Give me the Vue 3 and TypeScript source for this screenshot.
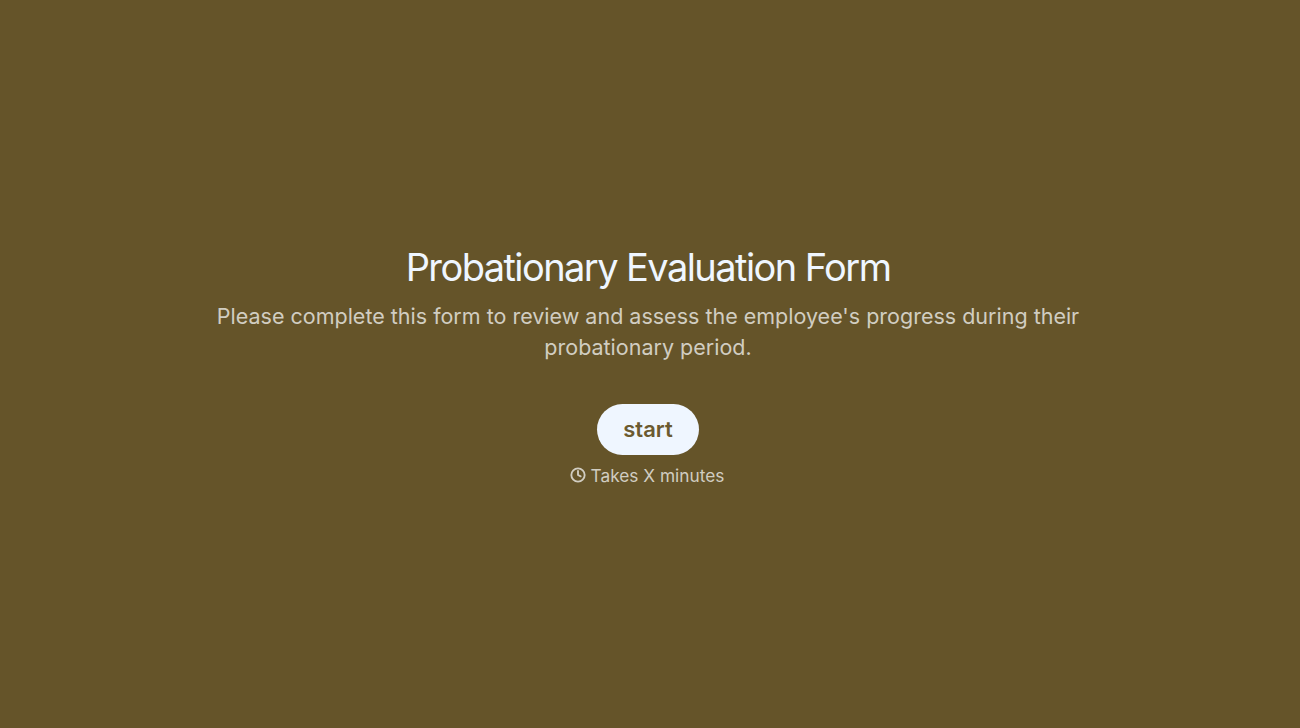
<script setup lang="ts">
const title = 'Probationary Evaluation Form'
</script>

<template>
  <main class="page">
    <section class="intro">
      <h1 class="title">{{ title }}</h1>
      <p class="desc">Please complete this form to review and assess the employee's progress during their probationary period.</p>
      <button class="start" type="button">start</button>
      <div class="time">
        <svg class="clock" viewBox="0 0 24 24" fill="none" stroke="currentColor" stroke-width="2.8" stroke-linecap="round" stroke-linejoin="round">
          <circle cx="12" cy="12" r="10" />
          <path d="M12 6v6l4 2" />
        </svg>
        <span>Takes X minutes</span>
      </div>
    </section>
  </main>
</template>

<style>
html, body { margin: 0; padding: 0; background: #655429; }
</style>

<style scoped>
.page {
  height: 728px;
  display: flex;
  align-items: center;
  justify-content: center;
  background: #655429;
  font-family: Inter, sans-serif;
  padding: 4px 4px 0 0;
  box-sizing: border-box;
}
.intro {
  width: 896px;
  display: flex;
  flex-direction: column;
  align-items: center;
  text-align: center;
}
.title {
  margin: 0;
  font-size: 38px;
  line-height: 40px;
  font-weight: 400;
  letter-spacing: -1.57px;
  color: #eff6ff;
}
.desc {
  margin: 14px 0 0;
  font-size: 21.5px;
  line-height: 31px;
  color: #d1cdc1;
}
.start {
  margin-top: 41px;
  height: 51px;
  width: 102px;
  padding: 0;
  border: 0;
  border-radius: 25.5px;
  background: #eff6ff;
  color: #6b5a30;
  font: 600 22px Inter, sans-serif;
}
.time {
  margin: 11px 2px 0 0;
  display: flex;
  align-items: center;
  gap: 5px;
  font-size: 17.3px;
  line-height: 20px;
  color: #d1cdc1;
}
.clock { width: 16px; height: 16px; margin-top: -2px; }
</style>
